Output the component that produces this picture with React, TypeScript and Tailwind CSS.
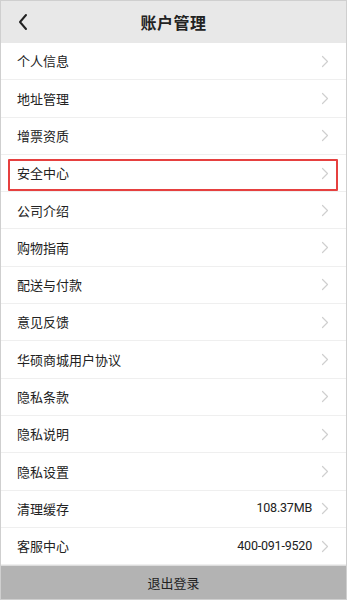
import React from 'react';

interface Item {
  label: string;
  value?: string;
}

const items: Item[] = [
  { label: '个人信息' },
  { label: '地址管理' },
  { label: '增票资质' },
  { label: '安全中心' },
  { label: '公司介绍' },
  { label: '购物指南' },
  { label: '配送与付款' },
  { label: '意见反馈' },
  { label: '华硕商城用户协议' },
  { label: '隐私条款' },
  { label: '隐私说明' },
  { label: '隐私设置' },
  { label: '清理缓存', value: '108.37MB' },
  { label: '客服中心', value: '400-091-9520' },
];

const ChevronRight = () => (
  <svg width="8" height="13" viewBox="0 0 8 13" fill="none" className="shrink-0">
    <path d="M1.5 1.5 L6.5 6.5 L1.5 11.5" stroke="#cfcfcf" strokeWidth="1.2" strokeLinecap="round" strokeLinejoin="round" />
  </svg>
);

export default function App() {
  return (
    <div
      className="relative w-[347px] h-[600px] overflow-hidden bg-white border border-[#cfcfcf] flex flex-col"
      style={{ fontFamily: '"Noto Sans CJK SC", "Noto Sans", sans-serif' }}
    >
      <div className="relative h-[42px] shrink-0 bg-[#e8e8e8] flex items-center justify-center">
        <svg width="12" height="18" viewBox="0 0 12 18" fill="none" className="absolute left-[16px] top-[12px]">
          <path d="M9 2 L3 9 L9 16" stroke="#222" strokeWidth="2" strokeLinecap="round" strokeLinejoin="round" />
        </svg>
        <span className="text-[16px] font-bold text-[#222] tracking-[0.5px]">账户管理</span>
      </div>
      <div className="flex flex-col">
        {items.map((item) => (
          <div
            key={item.label}
            className="h-[37.3px] border-b border-[#efefef] flex items-center pl-[16px] pr-[17px]"
          >
            <span className="flex-1 text-[13px] text-[#222]">{item.label}</span>
            {item.value && (
              <span
                className="text-[12.5px] text-[#222] mr-[9px] tracking-[-0.2px]"
                style={{ fontFamily: 'Roboto, "Noto Sans", sans-serif' }}
              >
                {item.value}
              </span>
            )}
            <ChevronRight />
          </div>
        ))}
      </div>
      <div className="flex-1 bg-[#b3b3b3] flex items-center justify-center border-t border-[#dcdcdc]">
        <span className="text-[13px] text-[#222]">退出登录</span>
      </div>
      <div className="absolute left-[7px] top-[158px] w-[330px] h-[32px] border-2 border-[#e6403f] rounded-[1px] pointer-events-none" />
    </div>
  );
}
